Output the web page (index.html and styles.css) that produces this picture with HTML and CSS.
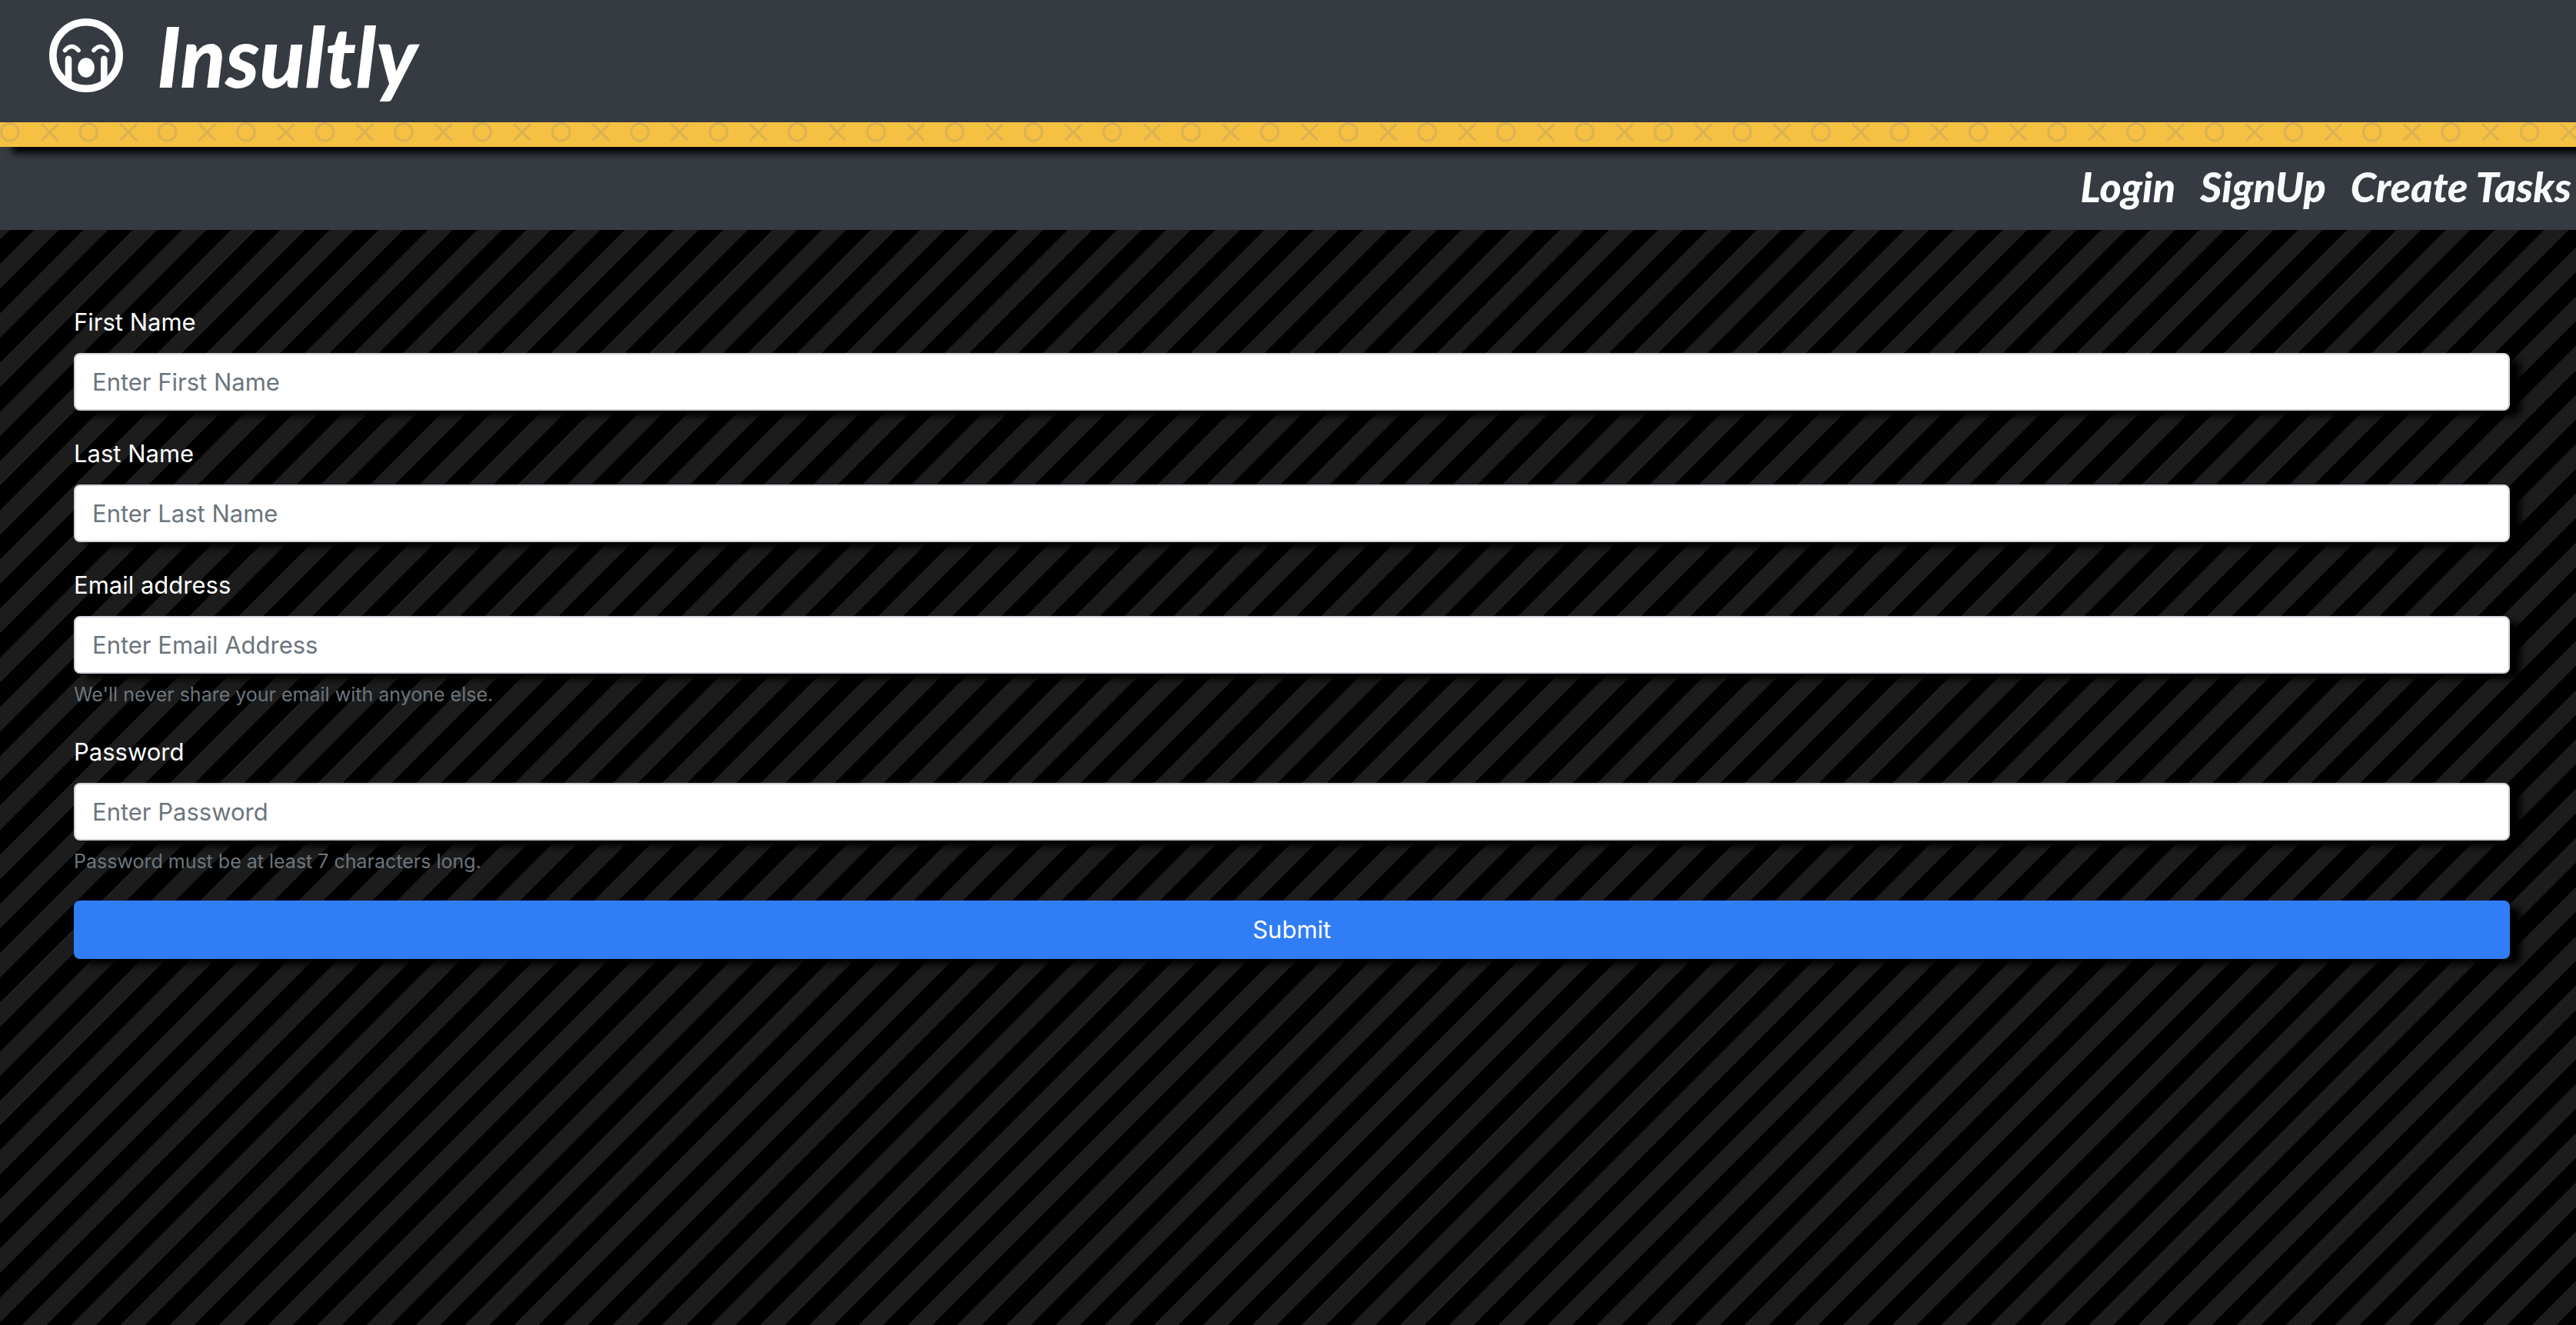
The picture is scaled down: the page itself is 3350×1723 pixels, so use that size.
FILE: index.html
```html
<!DOCTYPE html>
<html lang="en">
<head>
<meta charset="utf-8">
<meta name="viewport" content="width=device-width, initial-scale=1">
<title>Insultly</title>
<link rel="stylesheet" href="styles.css">
</head>
<body>
<header class="header">
  <a class="brand" href="#">
    <svg class="brand-icon" viewBox="0 0 96 96" aria-hidden="true">
      <circle fill="none" stroke="currentColor" stroke-width="9.600" cx="48" cy="48" r="43.200"/>
      <path fill="none" stroke="currentColor" stroke-width="5.600" stroke-linecap="round" d="M20.500 41.500q8.800-10 17.600 0M57.900 41.500q8.800-10 17.600 0"/>
      <path fill="currentColor" d="M20.700 52.700a4.300 4.300 0 0 1 8.600 0v32l-8.600-6zM67 52.700a4.300 4.300 0 0 1 8.600 0v26l-8.600 6z"/>
      <ellipse fill="currentColor" cx="48" cy="64" rx="10.800" ry="12.700"/>
    </svg>
    <span class="brand-name">Insultly</span>
  </a>
</header>
<div class="ribbon">
  <svg class="ribbon-art" aria-hidden="true">
    <defs>
      <pattern id="xo" width="64" height="20" patternUnits="userSpaceOnUse" patternTransform="scale(1.6)">
        <g fill="none" stroke="#dab252" stroke-width="1.900">
          <circle cx="8" cy="8" r="7.050"/>
          <path d="M33.600 1.300l13.600 13.600M47.200 1.300l-13.600 13.600"/>
        </g>
      </pattern>
    </defs>
    <rect width="100%" height="100%" fill="url(#xo)"/>
  </svg>
</div>
<nav class="nav">
  <a class="nav-link nav-link-active" href="#">Login</a>
  <a class="nav-link" href="#">SignUp</a>
  <a class="nav-link" href="#">Create Tasks</a>
</nav>
<main class="main">
  <form class="form">
    <div class="field">
      <label class="label" for="first">First Name</label>
      <input class="input" id="first" type="text" placeholder="Enter First Name">
    </div>
    <div class="field">
      <label class="label" for="last">Last Name</label>
      <input class="input" id="last" type="text" placeholder="Enter Last Name">
    </div>
    <div class="field">
      <label class="label" for="email">Email address</label>
      <input class="input" id="email" type="email" placeholder="Enter Email Address">
      <small class="hint">We'll never share your email with anyone else.</small>
    </div>
    <div class="field">
      <label class="label" for="password">Password</label>
      <input class="input" id="password" type="password" placeholder="Enter Password">
      <small class="hint">Password must be at least 7 characters long.</small>
    </div>
    <button class="submit" type="submit">Submit</button>
  </form>
</main>
</body>
</html>
```
FILE: styles.css
```css
* { box-sizing: border-box; }

body {
  margin: 0;
  min-height: 100vh;
  font-family: Inter, "Liberation Sans", sans-serif;
  font-size: 31px;
  line-height: 48px;
  color: #fff;
  background-color: #000;
  background-image: linear-gradient(135deg, #1c1c1c 25%, #000 25%, #000 50%, #1c1c1c 50%, #1c1c1c 75%, #000 75%);
  background-size: 64px 64px;
  background-position: 23px 0;
}

.header {
  display: flex;
  align-items: center;
  height: 159px;
  padding: 0 64px 16px;
  background: #363a41;
}

.brand {
  display: flex;
  align-items: center;
  gap: 44px;
  color: #fff;
  text-decoration: none;
}

.brand-icon { width: 96px; height: 96px; }

.brand-name {
  font-family: Lato, "Liberation Sans", sans-serif;
  font-size: 108px;
  line-height: 128px;
  font-weight: 900;
  font-style: italic;
}

.ribbon {
  position: relative;
  height: 32px;
  background: #f5c143;
  box-shadow: 16px 8px 10px #000;
}

.ribbon-art { display: block; width: 100%; height: 100%; }

.nav {
  display: flex;
  align-items: center;
  justify-content: flex-end;
  gap: 32px;
  height: 108px;
  padding: 0 6px 4px;
  background: #363a41;
}

.nav-link {
  color: #f8f9fa;
  font-family: Lato, "Liberation Sans", sans-serif;
  font-size: 54px;
  font-weight: 900;
  font-style: italic;
  text-decoration: none;
}

.nav-link-active { color: #fff; }

.main { padding: 96px 86px 96px 96px; }

.form {
  display: flex;
  flex-direction: column;
  gap: 32px;
}

.field { display: flex; flex-direction: column; }

.label { margin-bottom: 16px; }

.input,
.submit {
  width: 100%;
  border-radius: 8px;
  font: inherit;
  box-shadow: 15px 8px 10px -1px #000;
}

.input {
  height: 75px;
  padding: 0 22px;
  border: 2px solid #ced4da;
  background: #fff;
  color: #495057;
}

.input::placeholder { color: #6c757d; opacity: 1; }

.hint {
  margin-top: 8px;
  font-size: 25px;
  line-height: 38px;
  color: #6c757d;
}

.submit {
  height: 76px;
  border: 0;
  background: #307df6;
  color: #fff;
}
```
